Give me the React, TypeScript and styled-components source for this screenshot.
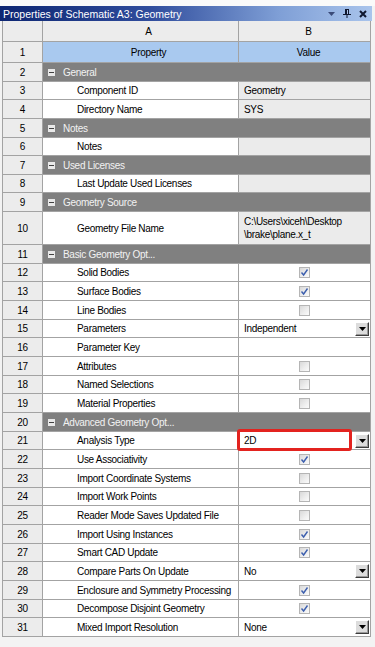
import React from 'react';
import styled, { createGlobalStyle } from 'styled-components';

const Global = createGlobalStyle`
  html, body { margin: 0; padding: 0; background: #f3f3f3; }
  body { font-family: "Liberation Sans", Arial, sans-serif; font-size: 10px; color: #000; }
`;

const Window = styled.div`
  width: 375px;
  height: 647px;
  display: flex;
  flex-direction: column;
  background: #f3f3f3;
  overflow: hidden;
`;

const TopStrip = styled.div`
  height: 6px;
  background: #fafafa;
`;

const TitleBar = styled.div`
  height: 15px;
  width: 372px;
  box-sizing: border-box;
  display: flex;
  align-items: center;
  padding-left: 3px;
  background: linear-gradient(to right, #0d2672 0%, #2f4c9c 40%, #7f9fd6 75%, #a9c4ec 100%);
  color: #fff;
  font-size: 10.5px;
`;

const TitleText = styled.span`
  flex: 1;
  white-space: nowrap;
`;

const TitleIcons = styled.div`
  display: flex;
  align-items: center;
  gap: 8px;
  padding-right: 5px;
  color: #111a3a;
`;

const Table = styled.div`
  margin-left: 2px;
  width: 369px;
  display: flex;
  flex-direction: column;
  letter-spacing: -0.3px;
`;

const Row = styled.div<{ $h: number }>`
  display: grid;
  grid-template-columns: 41px 196px 132px;
  height: ${(p) => p.$h}px;
`;

const Cell = styled.div`
  box-sizing: border-box;
  border-right: 1px solid #a3a3a3;
  border-bottom: 1px solid #a3a3a3;
  display: flex;
  align-items: center;
  white-space: nowrap;
  position: relative;
`;

const NumCell = styled(Cell)`
  border-left: 1px solid #a3a3a3;
  background: #ececec;
  justify-content: center;
`;

const HeadCell = styled(Cell)<{ $shift: number }>`
  background: #ececec;
  justify-content: center;
  padding-left: ${(p) => p.$shift}px;
`;

const TitleCell = styled(Cell)<{ $shift: number }>`
  background: #a9c9ef;
  justify-content: center;
  padding-left: ${(p) => p.$shift}px;
`;

const GroupCell = styled(Cell)`
  grid-column: span 2;
  background: #808080;
  color: #f2f2f2;
  padding-left: 5px;
  gap: 8px;
`;

const Collapse = styled.span`
  width: 7px;
  height: 7px;
  background: #e8e8e8;
  display: inline-flex;
  align-items: center;
  justify-content: center;
  &::after {
    content: '';
    width: 5px;
    height: 1px;
    background: #404040;
  }
`;

const NameCell = styled(Cell)`
  background: #fff;
  padding-left: 34px;
  overflow: hidden;
`;

const ValueCell = styled(Cell)<{ $ro: boolean }>`
  background: ${(p) => (p.$ro ? '#ebebeb' : '#fff')};
  padding-left: 5px;
  padding-right: 1px;
`;

const CenterValue = styled(ValueCell)`
  justify-content: center;
  padding-left: 0;
`;

const MultiLine = styled.span`
  white-space: pre;
  line-height: 13px;
`;

const ValueText = styled.span`
  flex: 1;
`;

const CheckBox = styled.span`
  width: 11px;
  height: 11px;
  box-sizing: border-box;
  border: 1px solid #b5b5b5;
  background: linear-gradient(135deg, #d9d9d9 0%, #efefef 60%, #fbfbfb 100%);
  display: inline-flex;
  align-items: center;
  justify-content: center;
`;

const DropBtn = styled.span`
  width: 14px;
  height: 14px;
  box-sizing: border-box;
  background: #dcdcdc;
  border: 1px solid;
  border-color: #ffffff #3c3c3c #3c3c3c #ffffff;
  box-shadow: inset -1px -1px 0 #9a9a9a;
  display: inline-flex;
  align-items: center;
  justify-content: center;
`;

const Highlight = styled.span`
  position: absolute;
  z-index: 2;
  left: -2px;
  top: -3px;
  width: 115px;
  height: 22px;
  box-sizing: border-box;
  border: 3px solid #e3231f;
  border-radius: 3px;
  pointer-events: none;
`;

type Item =
  | { n: number; group: string }
  | {
      n: number;
      name: string;
      kind: 'text' | 'check' | 'select';
      value?: string;
      on?: boolean;
      ro?: boolean;
      mark?: boolean;
    };

const items: Item[] = [
  { n: 2, group: 'General' },
  { n: 3, name: 'Component ID', kind: 'text', value: 'Geometry', ro: true },
  { n: 4, name: 'Directory Name', kind: 'text', value: 'SYS', ro: true },
  { n: 5, group: 'Notes' },
  { n: 6, name: 'Notes', kind: 'text', value: '', ro: true },
  { n: 7, group: 'Used Licenses' },
  { n: 8, name: 'Last Update Used Licenses', kind: 'text', value: '', ro: true },
  { n: 9, group: 'Geometry Source' },
  {
    n: 10,
    name: 'Geometry File Name',
    kind: 'text',
    value: 'C:\\Users\\xiceh\\Desktop\n\\brake\\plane.x_t',
    ro: true,
  },
  { n: 11, group: 'Basic Geometry Opt...' },
  { n: 12, name: 'Solid Bodies', kind: 'check', on: true },
  { n: 13, name: 'Surface Bodies', kind: 'check', on: true },
  { n: 14, name: 'Line Bodies', kind: 'check', on: false },
  { n: 15, name: 'Parameters', kind: 'select', value: 'Independent' },
  { n: 16, name: 'Parameter Key', kind: 'text', value: '' },
  { n: 17, name: 'Attributes', kind: 'check', on: false },
  { n: 18, name: 'Named Selections', kind: 'check', on: false },
  { n: 19, name: 'Material Properties', kind: 'check', on: false },
  { n: 20, group: 'Advanced Geometry Opt...' },
  { n: 21, name: 'Analysis Type', kind: 'select', value: '2D', mark: true },
  { n: 22, name: 'Use Associativity', kind: 'check', on: true },
  { n: 23, name: 'Import Coordinate Systems', kind: 'check', on: false },
  { n: 24, name: 'Import Work Points', kind: 'check', on: false },
  { n: 25, name: 'Reader Mode Saves Updated File', kind: 'check', on: false },
  { n: 26, name: 'Import Using Instances', kind: 'check', on: true },
  { n: 27, name: 'Smart CAD Update', kind: 'check', on: true },
  { n: 28, name: 'Compare Parts On Update', kind: 'select', value: 'No' },
  { n: 29, name: 'Enclosure and Symmetry Processing', kind: 'check', on: true },
  { n: 30, name: 'Decompose Disjoint Geometry', kind: 'check', on: true },
  { n: 31, name: 'Mixed Import Resolution', kind: 'select', value: 'None' },
];

function split(start: number, end: number, n: number): number[] {
  const step = (end - start) / n;
  const out: number[] = [];
  for (let i = 0; i < n; i++) {
    out.push(Math.round(start + (i + 1) * step) - Math.round(start + i * step));
  }
  return out;
}

const heights: number[] = [...split(63, 212, 8), 33, ...split(245, 637, 21)];

const Tick = () => (
  <svg width="9" height="9" viewBox="0 0 9 9">
    <path d="M1.5 4.5 L3.6 7 L7.5 1.5" fill="none" stroke="#3d5fae" strokeWidth="1.4" />
  </svg>
);

const Arrow = () => (
  <svg width="7" height="4" viewBox="0 0 7 4">
    <path d="M0 0 H7 L3.5 4 Z" fill="#000" />
  </svg>
);

function Value({ it }: { it: Extract<Item, { name: string }> }) {
  if (it.kind === 'check') {
    return (
      <CenterValue $ro={false}>
        <CheckBox>{it.on ? <Tick /> : null}</CheckBox>
      </CenterValue>
    );
  }
  if (it.kind === 'select') {
    return (
      <ValueCell $ro={false}>
        <ValueText>{it.value}</ValueText>
        <DropBtn>
          <Arrow />
        </DropBtn>
        {it.mark ? <Highlight /> : null}
      </ValueCell>
    );
  }
  return (
    <ValueCell $ro={!!it.ro}>
      <MultiLine>{it.value}</MultiLine>
    </ValueCell>
  );
}

export default function App() {
  return (
    <Window>
      <Global />
      <TopStrip />
      <TitleBar>
        <TitleText>Properties of Schematic A3: Geometry</TitleText>
        <TitleIcons>
          <svg width="7" height="4" viewBox="0 0 7 4">
            <path d="M0 0 H7 L3.5 4 Z" fill="#3a4a78" />
          </svg>
          <svg width="8" height="9" viewBox="0 0 8 9">
            <path d="M2 0 H6 V5 H8 V6 H0 V5 H2 Z M4.5 6 V9 H3.5 V6 Z" fill="#101830" />
            <path d="M4 1 H5 V5 H4 Z" fill="#b0c4e8" />
          </svg>
          <svg width="8" height="8" viewBox="0 0 8 8">
            <path d="M1 1 L7 7 M7 1 L1 7" stroke="#101830" strokeWidth="2" />
          </svg>
        </TitleIcons>
      </TitleBar>
      <Table>
        <Row $h={21}>
          <NumCell />
          <HeadCell $shift={16}>A</HeadCell>
          <HeadCell $shift={8}>B</HeadCell>
        </Row>
        <Row $h={21}>
          <NumCell>1</NumCell>
          <TitleCell $shift={16}>Property</TitleCell>
          <TitleCell $shift={8}>Value</TitleCell>
        </Row>
        {items.map((it, i) =>
          'group' in it ? (
            <Row key={it.n} $h={heights[i]}>
              <NumCell>{it.n}</NumCell>
              <GroupCell>
                <Collapse />
                {it.group}
              </GroupCell>
            </Row>
          ) : (
            <Row key={it.n} $h={heights[i]}>
              <NumCell>{it.n}</NumCell>
              <NameCell>{it.name}</NameCell>
              <Value it={it} />
            </Row>
          )
        )}
      </Table>
    </Window>
  );
}
